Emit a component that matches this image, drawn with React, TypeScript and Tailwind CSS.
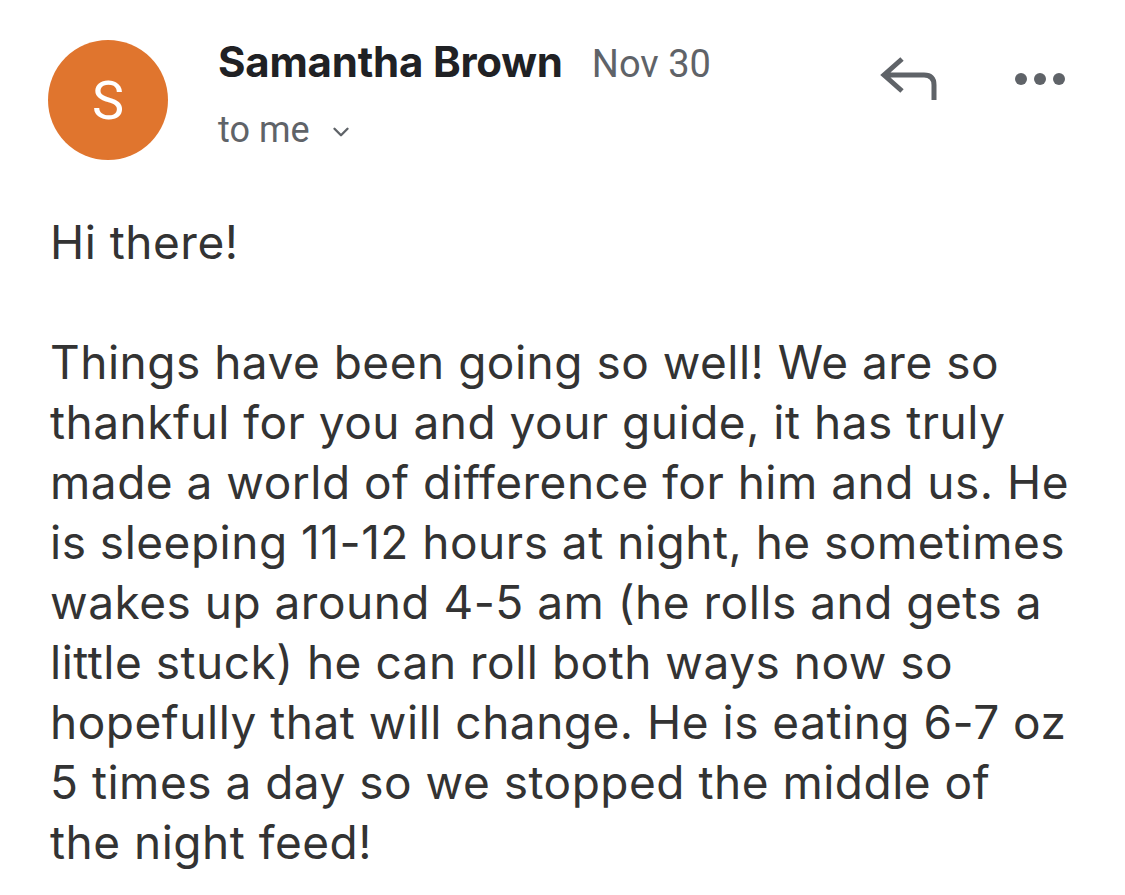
import { ChevronDown } from "lucide-react";

const lines = [
  "Things have been going so well! We are so",
  "thankful for you and your guide, it has truly",
  "made a world of difference for him and us. He",
  "is sleeping 11-12 hours at night, he sometimes",
  "wakes up around 4-5 am (he rolls and gets a",
  "little stuck) he can roll both ways now so",
  "hopefully that will change. He is eating 6-7 oz",
  "5 times a day so we stopped the middle of",
  "the night feed!",
];

function ReplyIcon() {
  return (
    <svg width="58" height="46" viewBox="0 0 58 46" fill="none">
      <path
        d="M22 3 L4 19 L22 35 M4 19 H44 Q54 19 54 29 V44"
        stroke="#5f6368"
        strokeWidth="5"
        strokeLinejoin="miter"
      />
    </svg>
  );
}

export default function App() {
  return (
    <div className="min-h-screen bg-white pl-[48px] pr-[60px] pt-[40px] font-['Inter','Liberation_Sans',sans-serif]">
      <header className="flex items-start">
        <div className="flex h-[120px] w-[120px] shrink-0 items-center justify-center rounded-full bg-[#e0752e] font-['Roboto',sans-serif] text-[54px] text-white">
          S
        </div>
        <div className="ml-[50px] flex flex-col">
          <div className="flex items-baseline gap-[29px]">
            <span className="text-[42px] font-bold leading-[44px] tracking-[-0.2px] text-[#202124]">
              Samantha Brown
            </span>
            <span className="font-['Roboto',sans-serif] text-[38px] leading-[44px] text-[#5f6368]">Nov 30</span>
          </div>
          <div className="mt-[24px] flex items-center gap-[18px] font-['Roboto',sans-serif] text-[36px] leading-[40px] text-[#5f6368]">
            <span>to me</span>
            <ChevronDown size={26} strokeWidth={2.2} className="mt-[4px]" />
          </div>
        </div>
        <div className="ml-auto mt-[16px] flex items-center gap-[77px]">
          <ReplyIcon />
          <div className="flex gap-[7px]">
            <span className="h-[12px] w-[12px] rounded-full bg-[#5f6368]" />
            <span className="h-[12px] w-[12px] rounded-full bg-[#5f6368]" />
            <span className="h-[12px] w-[12px] rounded-full bg-[#5f6368]" />
          </div>
        </div>
      </header>
      <main className="mt-[52px] pl-[2px] text-[46px] leading-[60px] tracking-[0.5px] text-[#333333]">
        <p>Hi there!</p>
        <p className="mt-[60px]">
          {lines.map((l) => (
            <span key={l} className="block whitespace-nowrap">
              {l}
            </span>
          ))}
        </p>
      </main>
    </div>
  );
}
